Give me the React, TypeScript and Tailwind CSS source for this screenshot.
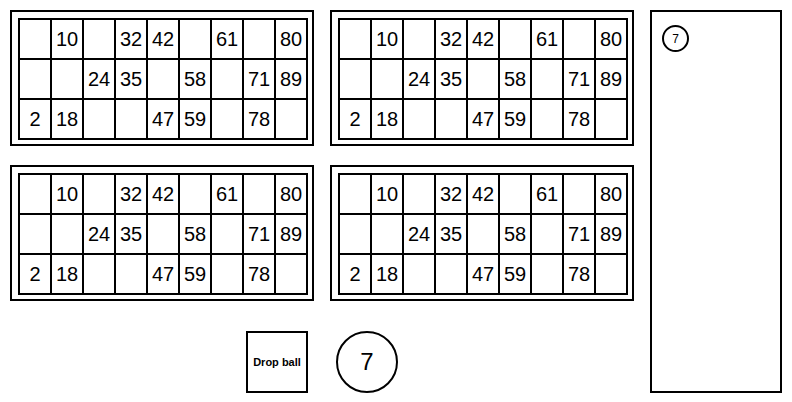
import React from 'react';

const rows: (number | null)[][] = [
  [null, 10, null, 32, 42, null, 61, null, 80],
  [null, null, 24, 35, null, 58, null, 71, 89],
  [2, 18, null, null, 47, 59, null, 78, null],
];

const BingoCard: React.FC = () => {
  return (
    <div className="w-[304px] h-[136px] border-2 border-black pl-[6px] pt-[6px]">
      <div className="grid grid-cols-[repeat(9,32px)] w-[290px] border-l-2 border-t-2 border-black">
        {rows.flat().map((n, i) => (
          <div
            key={i}
            className="h-[40px] border-r-2 border-b-2 border-black flex items-center justify-center text-[20px] leading-none text-black"
          >
            {n ?? ''}
          </div>
        ))}
      </div>
    </div>
  );
};

const App: React.FC = () => {
  return (
    <div className="flex gap-4 p-[10px] bg-white font-['Liberation_Sans',Arial,sans-serif] text-black">
      <div className="flex flex-col w-[624px]">
        <div className="grid grid-cols-2 gap-x-4 gap-y-[19px]">
          <BingoCard />
          <BingoCard />
          <BingoCard />
          <BingoCard />
        </div>

        <div className="flex justify-center gap-[28px] mt-[30px]">
          <button className="w-[62px] h-[62px] border-2 border-black bg-white flex items-center justify-center text-[11px] font-bold">
            Drop ball
          </button>
          <div className="w-[62px] h-[62px] rounded-full border-2 border-black flex items-center justify-center text-[24px]">
            7
          </div>
        </div>
      </div>

      <div className="w-[132px] border-2 border-black pl-[10px] pt-[13px]">
        <div className="w-[27px] h-[27px] rounded-full border-2 border-black flex items-center justify-center text-[12px]">
          7
        </div>
      </div>
    </div>
  );
};

export default App;
